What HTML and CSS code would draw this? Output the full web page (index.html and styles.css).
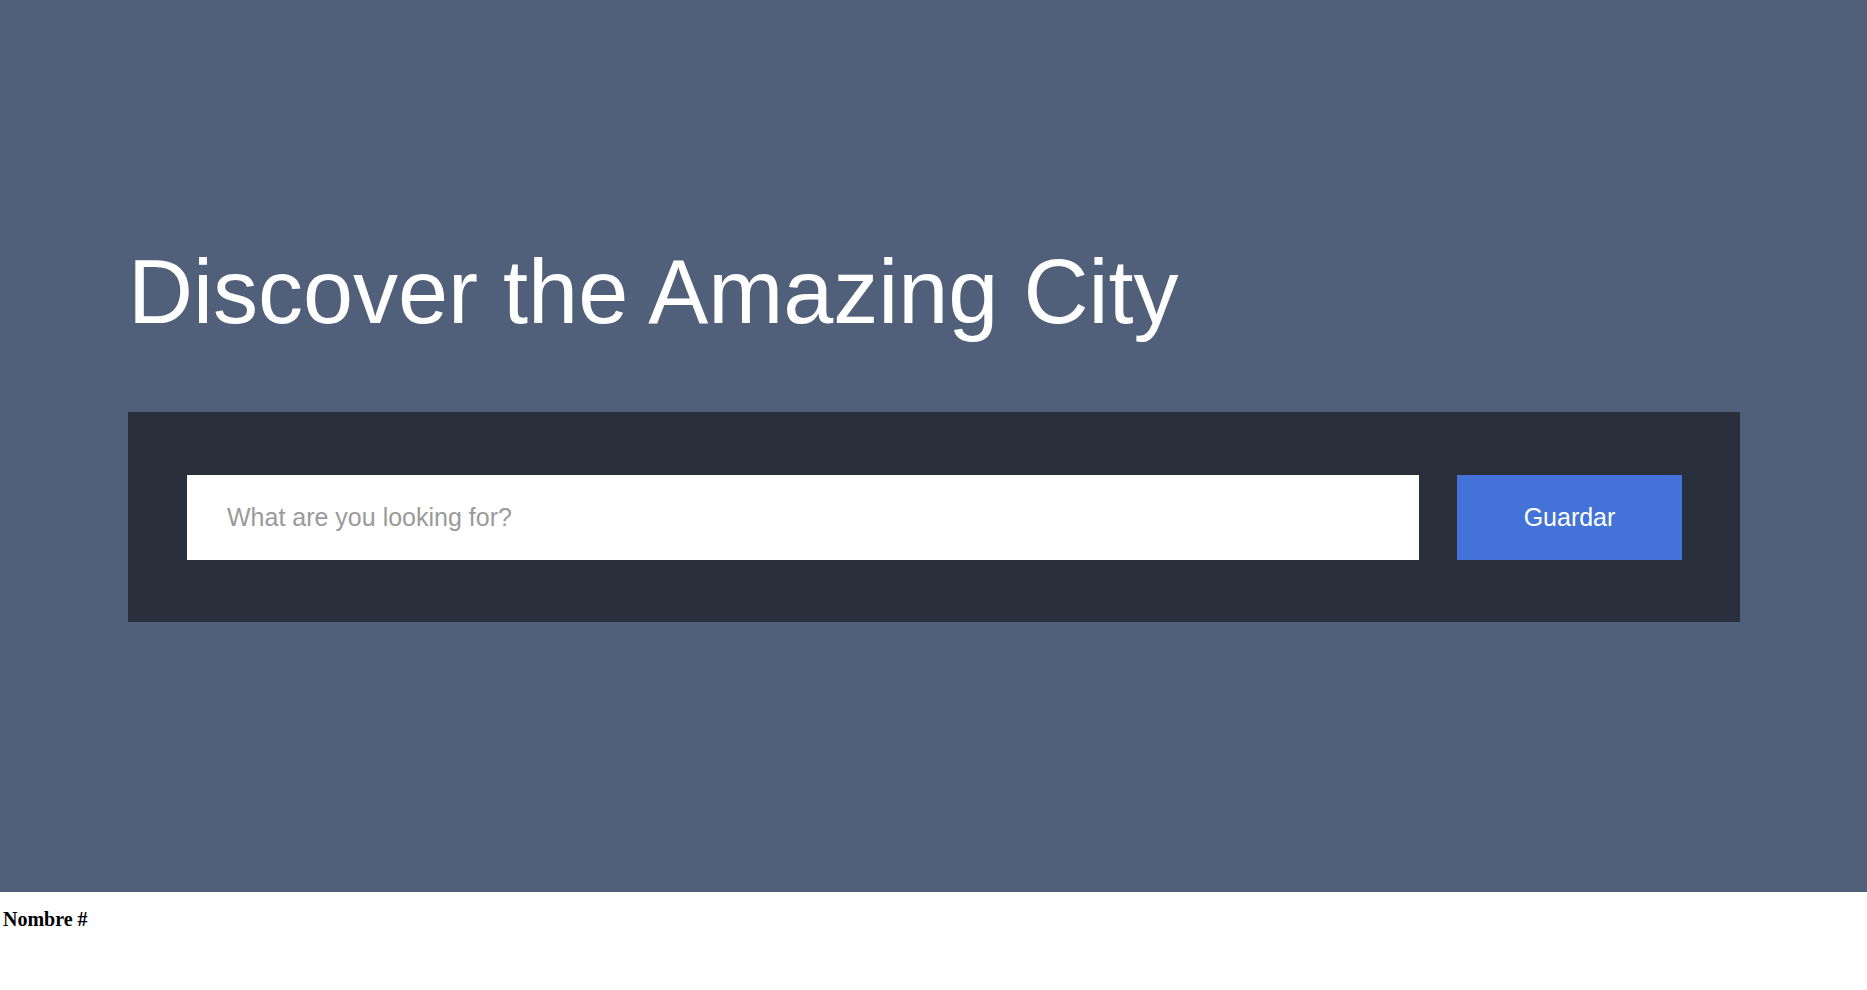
FILE: index.html
```html
<!DOCTYPE html>
<html lang="es">
<head>
<meta charset="utf-8">
<title>Discover the Amazing City</title>
<link rel="stylesheet" href="styles.css">
</head>
<body>
<section class="hero">
  <h1 class="hero-title">Discover the Amazing City</h1>
  <form class="search-box">
    <input class="search-input" type="text" placeholder="What are you looking for?">
    <button class="search-button" type="button">Guardar</button>
  </form>
</section>
<div class="list-header">Nombre #</div>
</body>
</html>
```

FILE: styles.css
```css
html, body {
  margin: 0;
  padding: 0;
  background: #ffffff;
}

.hero {
  box-sizing: border-box;
  height: 892px;
  padding: 241px 127px 0 128px;
  background: #50607a;
  font-family: "Liberation Sans", Arial, sans-serif;
}

.hero-title {
  margin: 0 0 68px 0;
  font-size: 90px;
  font-weight: normal;
  line-height: normal;
  color: #ffffff;
}

.search-box {
  display: flex;
  gap: 38px;
  box-sizing: border-box;
  height: 210px;
  padding: 63px 58px 62px 59px;
  background: #292f3b;
}

.search-input {
  flex: 1;
  box-sizing: border-box;
  height: 85px;
  margin: 0;
  padding: 0 40px;
  border: none;
  outline: none;
  background: #ffffff;
  font-family: "Liberation Sans", Arial, sans-serif;
  font-size: 25px;
  color: #333333;
}

.search-input::placeholder {
  color: #9a9a9a;
}

.search-button {
  width: 225px;
  height: 85px;
  margin: 0;
  padding: 0;
  border: none;
  background: #4372d8;
  color: #ffffff;
  font-family: "Liberation Sans", Arial, sans-serif;
  font-size: 25px;
  cursor: pointer;
}

.list-header {
  padding: 16px 0 0 3px;
  font-family: "Liberation Serif", "Times New Roman", serif;
  font-size: 20px;
  font-weight: bold;
  color: #000000;
}
```
